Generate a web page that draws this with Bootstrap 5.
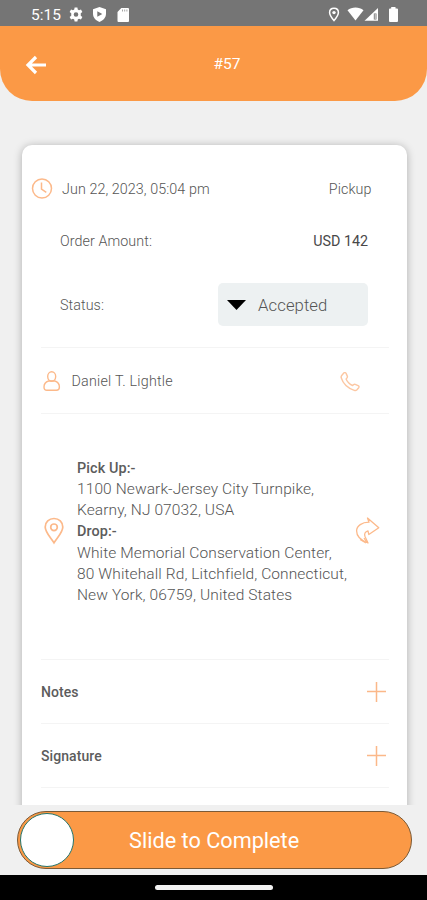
<!DOCTYPE html>
<html lang="en">
<head>
<meta charset="utf-8">
<meta name="viewport" content="width=device-width, initial-scale=1">
<title>Order #57</title>
<link href="https://cdn.jsdelivr.net/npm/bootstrap@5.3.0/dist/css/bootstrap.min.css" rel="stylesheet">
<style>
  body { font-family: Roboto, "Liberation Sans", sans-serif; font-size: 14.3px; letter-spacing: .08px; font-weight: 300; color: #555; background: #f0f0f0; }
  svg { display: block; flex: none; }
  .screen { height: 900px; }
  .status-bar { height: 26px; background: #757575; padding: 3px 28px 0 31px; font-size: 15.5px; letter-spacing: 0; font-weight: 400; line-height: 26px; }
  .app-bar { height: 75px; background: #fb9946; border-radius: 0 0 32px 32px; padding: 2px 24px 0; font-size: 15.5px; letter-spacing: 0; font-weight: 400; }
  .app-bar .side { width: 24px; }
  .app-bar .title { padding-left: 27px; }
  .order-card { margin: 43.5px 20.5px 0 21.5px; padding-top: 18px; height: 720px; border-radius: 10px; background: #fff; box-shadow: 0 1px 9px rgba(0,0,0,.28); }
  .row-date { height: 52px; padding: 2px 35px 0 9px; }
  .date-text { padding-left: 9.5px; }
  .row-date svg { margin-top: -2px; }
  .row-amount { height: 52px; padding: 2px 38.5px 0; }
  .row-status { height: 77px; padding: 0 38.5px 1px; margin-bottom: 3px; }
  .status-select { width: 150px; height: 43px; background: #edf1f2; border-radius: 5px; padding-left: 9px; font-size: 16.7px; }
  .status-text { padding-left: 12px; }
  .status-text, .status-label { padding-top: 2px; }
  .divided { margin: 0 17.5px 0 19.5px; border-top: 1.5px solid #f4f4f4; }
  .row-customer { height: 66px; padding-right: 29px; padding-top: 3px; }
  .name-text { padding: 1px 0 0 10.5px; letter-spacing: .22px; }
  .row-address { height: 246px; padding: 0 9px 10px 3px; font-size: 15.5px; letter-spacing: .1px; line-height: 21.1px; }
  .address-text { padding: 2px 0 0 13px; }
  .address-label { font-size: 14.4px; font-weight: 500; }
  .row-more { height: 64.1px; padding-right: 3px; padding-top: 2px; font-size: 14px; }
  .dark { color: #484848; font-weight: 400; letter-spacing: 0; }
  .mid { color: #5c5c5c; }
  .slide-area { height: 70px; background: #f0f0f0; padding: 5.5px 15.5px 0 16.5px; letter-spacing: 0; font-weight: 400; }
  .slide-track { height: 58px; border: 1px solid #7b5a36; border-radius: 29px; background: #fb9946; padding-left: 2px; }
  .slide-thumb { width: 54px; height: 54px; border: 1.5px solid #24746a; background: #fff; }
  .slide-label { font-size: 21.7px; padding-left: 55.5px; padding-top: 3px; }
  .system-nav { height: 25px; background: #000; }
  .home-pill { width: 118px; height: 5px; background: #f2f2f2; }
</style>
<script src="https://cdn.jsdelivr.net/npm/bootstrap@5.3.0/dist/js/bootstrap.bundle.min.js"></script>
</head>
<body>
<div class="screen d-flex flex-column overflow-hidden">

  <div class="status-bar flex-shrink-0 d-flex align-items-center text-white">
    <span>5:15</span>
    <svg class="ms-2" width="14" height="15" viewBox="0 0 20 20"><path fill="#fff" fill-rule="evenodd" d="M8 0h4l.5 3 1.8 1 2.8-1.1 2 3.5-2.3 1.9v3.4l2.3 1.9-2 3.5-2.8-1.1-1.8 1-.5 3H8l-.5-3-1.8-1-2.8 1.1-2-3.5 2.3-1.9V8.300L.9 6.400l2-3.500L5.700 4l1.800-1zM10 6.700a3.300 3.300 0 1 0 0 6.600 3.300 3.300 0 0 0 0-6.600z"/></svg>
    <svg class="ms-2" width="17" height="15" viewBox="0 0 17 15"><path fill="#fff" fill-rule="evenodd" d="M8.500 0 15 2.300v4.500c0 3.700-2.700 6.800-6.500 8.200C4.700 13.600 2 10.500 2 6.800V2.300zM6.300 4.200v5.600l5-2.800z"/></svg>
    <svg class="ms-2" width="14" height="14" viewBox="0 0 14 14"><path fill="#fff" d="M5.300 0H12a1 1 0 0 1 1 1v12a1 1 0 0 1-1 1H2.500a1 1 0 0 1-1-1V3.900z"/><path stroke="#a5a5a5" stroke-width="1" d="M6.500 1.500v2M8.700 1.500v2M10.900 1.500v2"/></svg>
    <svg class="ms-auto" width="12" height="15" viewBox="0 0 12 15"><path fill="none" stroke="#fff" stroke-width="1.500" d="M6 1.200c2.700 0 4.400 1.900 4.400 4.300C10.400 8.500 6 13.500 6 13.500S1.600 8.500 1.600 5.500C1.600 3.100 3.300 1.200 6 1.200z"/><circle cx="6" cy="5.600" r="1.700" fill="#fff"/></svg>
    <svg width="36" height="15" viewBox="-3 0 36 15" class="ms-1 me-1"><path fill="#fff" d="M.5 3.200c4.300-3.600 11.700-3.600 16 0L8.500 13.500z"/><path fill="#fff" d="M17.500 13.800 31 1v12.800z"/><path fill="#757575" d="M26.800 6.500h2.700v6h-2.700z"/><path stroke="#ddd" d="M28.200 7v5"/></svg>
    <svg class="ms-1" width="11" height="15" viewBox="0 0 11 15"><path fill="#fff" d="M3.200 0h4.300v1.500H9a1 1 0 0 1 1 1V14a1 1 0 0 1-1 1H2a1 1 0 0 1-1-1V2.500a1 1 0 0 1 1-1h1.200z"/></svg>
  </div>

  <header class="app-bar flex-shrink-0 d-flex align-items-center justify-content-between text-white">
    <div class="side">
      <svg width="24" height="20" viewBox="0 0 24 20"><path fill="none" stroke="#fff" stroke-width="3.200" d="M22 10H4.500M12 2 4 10l8 8"/></svg>
    </div>
    <span class="title">#57</span>
    <div class="side"></div>
  </header>

  <main class="flex-fill overflow-hidden">
    <section class="order-card">
      <div class="row-date d-flex align-items-center">
        <svg width="22" height="22" viewBox="0 0 22 22" fill="none" stroke="#fcb98a" stroke-width="1.500"><circle cx="11" cy="10.500" r="9.500"/><path d="M10.500 4.500V11l4.800 3.300"/></svg>
        <span class="date-text">Jun 22, 2023, 05:04 pm</span>
        <span class="ms-auto">Pickup</span>
      </div>
      <div class="row-amount d-flex align-items-center justify-content-between">
        <span>Order Amount:</span><span class="dark">USD 142</span>
      </div>
      <div class="row-status d-flex align-items-center justify-content-between">
        <span class="status-label">Status:</span>
        <div class="status-select d-flex align-items-center">
          <svg width="19" height="10" viewBox="0 0 19 10"><path d="M0 0h19L9.500 10z"/></svg>
          <span class="status-text">Accepted</span>
        </div>
      </div>

      <div class="divided row-customer d-flex align-items-center">
        <svg width="20" height="22" viewBox="0 0 20 22" fill="none" stroke="#fcb98a" stroke-width="1.400"><ellipse cx="10.700" cy="5.500" rx="4" ry="4.700"/><path d="M7.600 10C4.800 10.800 3 13 3 16c0 2.600.7 3.300 3 3.300h9.400c2.300 0 3-.7 3-3.300 0-3-1.800-5.200-4.600-6z"/></svg>
        <span class="name-text">Daniel T. Lightle</span>
        <svg class="ms-auto" width="20" height="20" viewBox="0 0 20 20" fill="none" stroke="#fcc7a2" stroke-width="1.400" stroke-linejoin="round"><path d="M1.500 3.800 4 .8c1-.5 1.800 0 2.200.8l1.200 2.800c.3 1-.2 1.700-1.300 2.600 1 2.600 3.700 5.300 6.500 6.500.9-1.200 1.700-1.500 2.600-1.200l2.900 1.300c1 .5 1.200 1.300.6 2.100l-2 2.300c-.7.700-1.500.7-2.400.4C7.500 16.100 3 11.500 1.200 5.800c-.2-.8-.1-1.400.3-2z"/></svg>
      </div>

      <div class="divided row-address d-flex align-items-center">
        <svg width="20" height="28" viewBox="0 0 20 28" fill="none" stroke="#fcb98a" stroke-width="1.700"><path d="M10 1.500c5 0 8.800 3.600 8.800 8.500 0 5.300-5.300 10.300-8.800 15.800C6.500 20.300 1.200 15.300 1.200 10c0-4.900 3.800-8.500 8.800-8.500z"/><circle cx="10" cy="10.300" r="3.300"/></svg>
        <div class="address-text text-nowrap">
          <div class="mid address-label">Pick Up:-</div>
          <div>1100 Newark-Jersey City Turnpike,</div>
          <div>Kearny, NJ 07032, USA</div>
          <div class="mid address-label">Drop:-</div>
          <div>White Memorial Conservation Center,</div>
          <div>80 Whitehall Rd, Litchfield, Connecticut,</div>
          <div>New York, 06759, United States</div>
        </div>
        <svg class="ms-auto" width="25" height="28" viewBox="0 0 25 28" fill="none" stroke="#fcb98a" stroke-width="1.300" stroke-linejoin="round"><path d="m12.500 1 11.300 9.700-10 6.800-.8-3.700c-3 .8-4 3-3 5.700l3 6.500C6 23.500 1.500 19.500 1.600 13.800 1.700 8.600 7 5.300 14 5.200z"/><path d="m5 22.500 6 3.500M9 21l3 4.500"/></svg>
      </div>

      <div class="divided row-more d-flex align-items-center justify-content-between">
        <span class="mid fw-medium">Notes</span>
        <svg width="19" height="20" viewBox="0 0 19 20" stroke="#fbb889" stroke-width="1.500"><path d="M9.500 0v20M0 9.500h19"/></svg>
      </div>
      <div class="divided row-more d-flex align-items-center justify-content-between">
        <span class="mid fw-medium">Signature</span>
        <svg width="19" height="20" viewBox="0 0 19 20" stroke="#fbb889" stroke-width="1.500"><path d="M9.500 0v20M0 9.500h19"/></svg>
      </div>
      <div class="divided"></div>
    </section>
  </main>

  <div class="slide-area flex-shrink-0">
    <div class="slide-track d-flex align-items-center text-white">
      <div class="slide-thumb rounded-circle"></div>
      <span class="slide-label">Slide to Complete</span>
    </div>
  </div>
  <div class="system-nav flex-shrink-0 d-flex align-items-center justify-content-center">
    <div class="home-pill rounded-pill"></div>
  </div>
</div>
</body>
</html>
